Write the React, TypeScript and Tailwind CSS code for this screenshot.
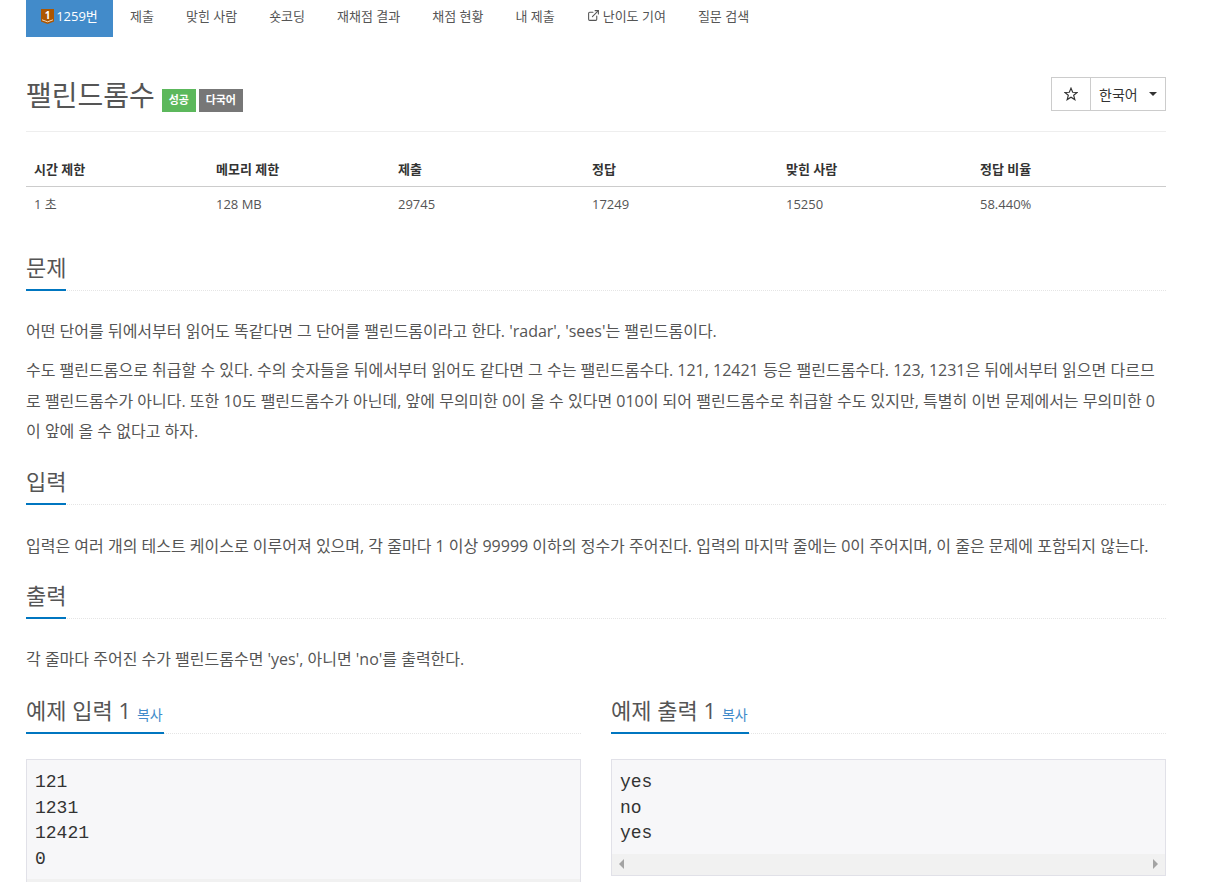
import React from "react";
import { ExternalLink } from "lucide-react";

const font = { fontFamily: '"Open Sans","Noto Sans CJK KR",sans-serif' };
const mono = { fontFamily: '"Liberation Mono",monospace' };

function Heading({ children, small }: { children: React.ReactNode; small?: string }) {
  return (
    <div className="border-b border-dotted border-[#e5e5e5] h-[40px]">
      <div className="inline-flex items-start whitespace-nowrap h-[40px] -mb-px border-b-2 border-[#0076c0] text-[22px] leading-[32px] text-[#555]">
        {children}
        {small && <span className="text-[14px] leading-[20px] text-[#428bca] ml-[6px] mr-px mt-[11px]">{small}</span>}
      </div>
    </div>
  );
}

function Sample({ title, text }: { title: string; text: string }) {
  return (
    <div>
      <Heading small="복사">{title}</Heading>
      <div className="mt-[25px] bg-[#f7f7f9] border border-[#e1e1e8] flex flex-col">
        <pre className="px-[8px] pt-[9.5px] pb-[6.5px] text-[18px] leading-[25.7px] text-[#333]" style={mono}>{text}</pre>
        <div className="h-[21px] bg-[#f1f1f1] flex items-center justify-between px-[7px]">
          <span className="w-0 h-0 border-y-[5px] border-y-transparent border-r-[5px] border-r-[#a3a3a3]"></span>
          <span className="w-0 h-0 border-y-[5px] border-y-transparent border-l-[5px] border-l-[#a3a3a3]"></span>
        </div>
      </div>
    </div>
  );
}

export default function App() {
  const tabs = ["제출", "맞힌 사람", "숏코딩", "재채점 결과", "채점 현황", "내 제출"];
  const heads = [["시간 제한", "w-[182px]"], ["메모리 제한", "w-[182px]"], ["제출", "w-[194px]"], ["정답", "w-[194px]"], ["맞힌 사람", "w-[194px]"], ["정답 비율", "flex-1"]];
  const vals = ["1 초", "128 MB", "29745", "17249", "15250", "58.440%"];
  return (
    <div className="w-[1217px] h-[882px] overflow-hidden bg-white text-[16px] text-[#333] pl-[26px]" style={font}>
      <div className="w-[1140px]">
        <nav className="flex h-[37px] text-[13px] leading-[32px] text-[#555]">
          <div className="w-[87px] bg-[#428bca] text-white flex items-start justify-center text-[13px]">
            <svg width="13" height="15" viewBox="0 0 13 15" className="mt-[9px] mr-[2px]">
              <path d="M0 0H13V12.5L6.5 15L0 12.5Z" fill="#ad5600" />
              <path d="M1 10.8L6.5 12.8L12 10.8" fill="none" stroke="#f3d9b8" strokeWidth="1" />
              <text x="6.5" y="9.5" fontSize="10" fontWeight="700" fill="#fff" textAnchor="middle">1</text>
            </svg>
            1259번
          </div>
          <div className="flex pl-[17px] gap-[32px]">
            {tabs.map((t) => <span key={t}>{t}</span>)}
            <span className="flex items-start">
              <ExternalLink size={13} strokeWidth={2} className="mt-[9px] mr-[3px]" />난이도 기여
            </span>
            <span>질문 검색</span>
          </div>
        </nav>

        <header className="mt-[37px] h-[58px] border-b border-[#eee] flex items-start justify-between">
          <div className="flex items-start">
            <h1 className="text-[28px] leading-[42px] text-[#555]">팰린드롬수</h1>
            <span className="ml-[7px] mt-[15px] w-[34px] h-[23px] bg-[#5cb85c] text-white text-[11px] font-bold flex items-center justify-center">성공</span>
            <span className="ml-[3px] mt-[15px] w-[44px] h-[23px] bg-[#777] text-white text-[11px] font-bold flex items-center justify-center">다국어</span>
          </div>
          <div className="flex mt-[3px] h-[34px] border border-[#ccc]">
            <span className="w-[39px] border-r border-[#ccc] flex items-center justify-center">
              <svg width="14" height="14" viewBox="0 0 24 24" fill="none" stroke="#333" strokeWidth="2">
                <polygon points="12,2 14.9,9 22.5,9.4 16.6,14.2 18.6,21.6 12,17.4 5.4,21.6 7.4,14.2 1.5,9.4 9.1,9" />
              </svg>
            </span>
            <span className="w-[74px] flex items-center pl-[8px] text-[14px]">
              한국어
              <span className="ml-[11px] w-0 h-0 border-x-[4px] border-x-transparent border-t-[4px] border-t-[#333]"></span>
            </span>
          </div>
        </header>

        <section className="mt-[20px] text-[13px]">
          <div className="flex h-[35px] border-b border-[#ccc] font-bold leading-[35px]">
            {heads.map(([h, w]) => <div key={h} className={`${w} px-[8px]`}>{h}</div>)}
          </div>
          <div className="flex h-[35px] leading-[35px] text-[#555]">
            {vals.map((v, i) => <div key={v} className={`${heads[i][1]} px-[8px]`}>{v}</div>)}
          </div>
        </section>

        <section className="mt-[29px]">
          <Heading>문제</Heading>
          <div className="mt-[25px] text-[#555] leading-[30.4px]">
            <p>어떤 단어를 뒤에서부터 읽어도 똑같다면 그 단어를 팰린드롬이라고 한다. 'radar', 'sees'는 팰린드롬이다.</p>
            <p className="mt-[9px]">수도 팰린드롬으로 취급할 수 있다. 수의 숫자들을 뒤에서부터 읽어도 같다면 그 수는 팰린드롬수다. 121, 12421 등은 팰린드롬수다. 123, 1231은 뒤에서부터 읽으면 다르므로 팰린드롬수가 아니다. 또한 10도 팰린드롬수가 아닌데, 앞에 무의미한 0이 올 수 있다면 010이 되어 팰린드롬수로 취급할 수도 있지만, 특별히 이번 문제에서는 무의미한 0이 앞에 올 수 없다고 하자.</p>
          </div>
        </section>

        <section className="mt-[18px]">
          <Heading>입력</Heading>
          <p className="mt-[26px] text-[#555] leading-[30.4px]">입력은 여러 개의 테스트 케이스로 이루어져 있으며, 각 줄마다 1 이상 99999 이하의 정수가 주어진다. 입력의 마지막 줄에는 0이 주어지며, 이 줄은 문제에 포함되지 않는다.</p>
        </section>

        <section className="mt-[18px]">
          <Heading>출력</Heading>
          <p className="mt-[25px] text-[#555] leading-[30.4px]">각 줄마다 주어진 수가 팰린드롬수면 'yes', 아니면 'no'를 출력한다.</p>
        </section>

        <section className="mt-[20px] grid grid-cols-2 gap-x-[30px]">
          <Sample title="예제 입력 1" text={"121\n1231\n12421\n0"} />
          <div className="self-start"><Sample title="예제 출력 1" text={"yes\nno\nyes"} /></div>
        </section>
      </div>
    </div>
  );
}
